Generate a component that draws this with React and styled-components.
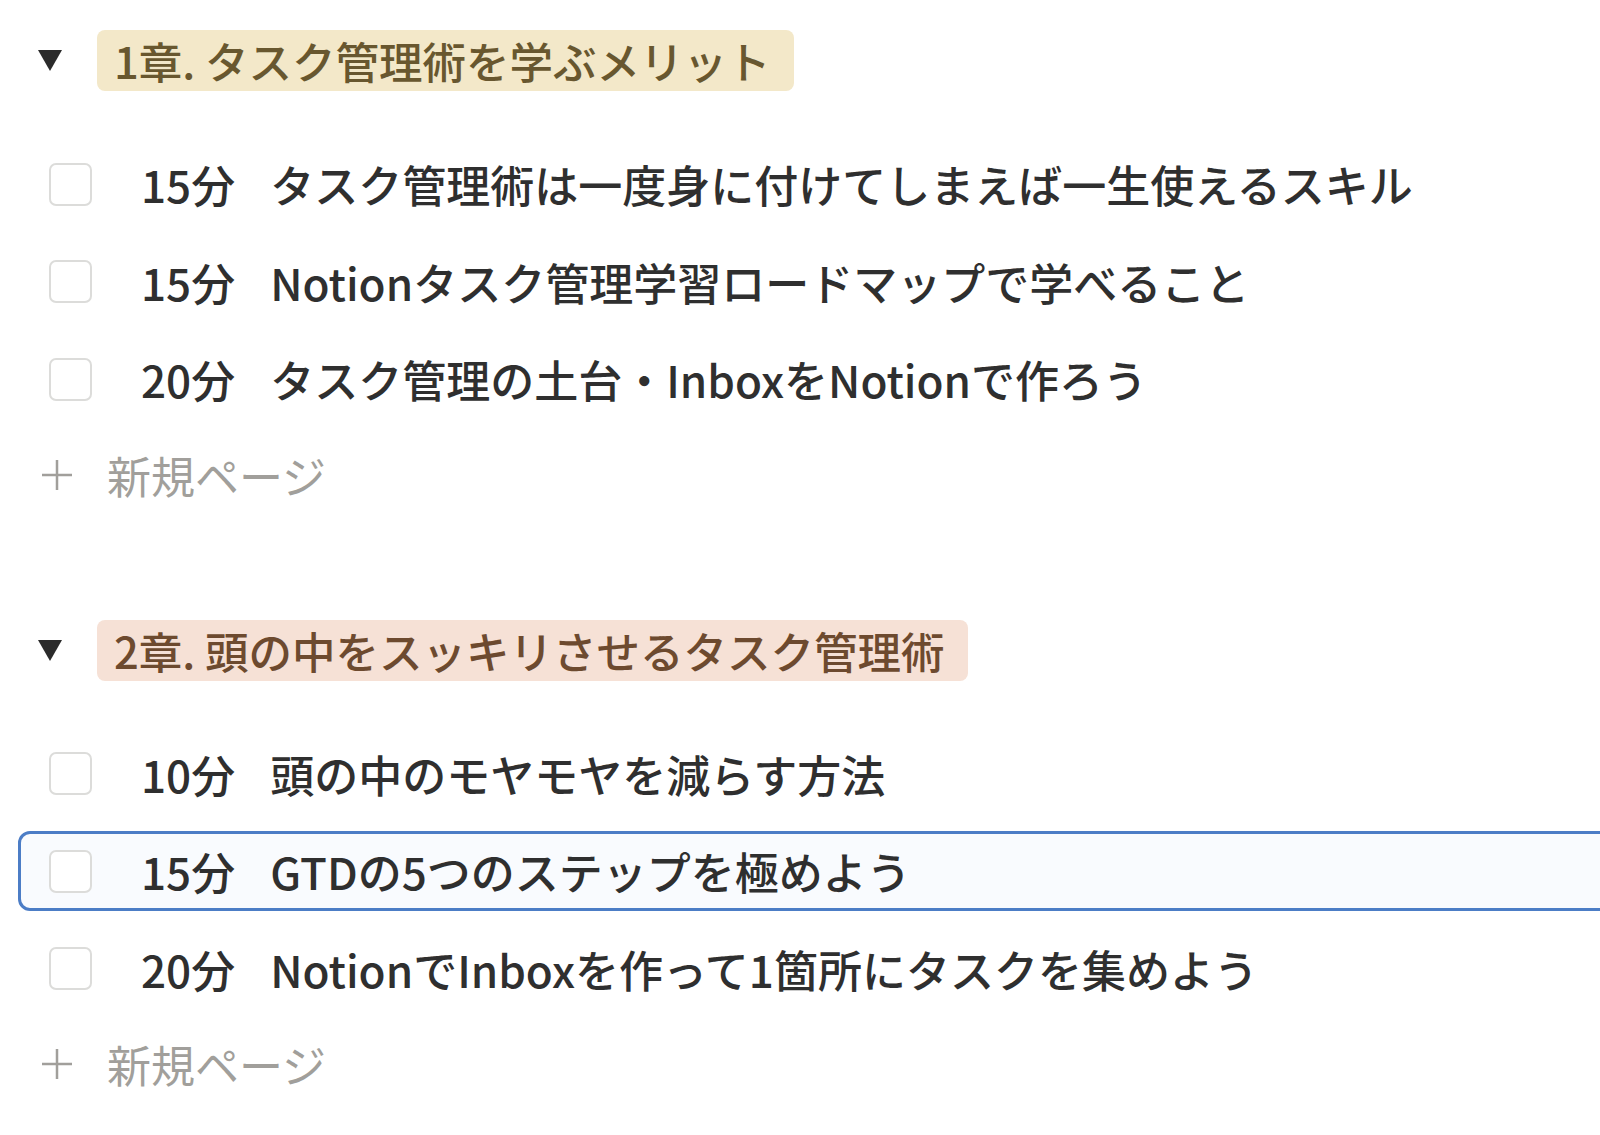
import React from "react";
import styled, { createGlobalStyle } from "styled-components";

const groups = [
  {
    title: "1章. タスク管理術を学ぶメリット",
    color: "yellow",
    items: [
      { time: "15分", title: "タスク管理術は一度身に付けてしまえば一生使えるスキル" },
      { time: "15分", title: "Notionタスク管理学習ロードマップで学べること" },
      { time: "20分", title: "タスク管理の土台・InboxをNotionで作ろう" },
    ],
  },
  {
    title: "2章. 頭の中をスッキリさせるタスク管理術",
    color: "orange",
    items: [
      { time: "10分", title: "頭の中のモヤモヤを減らす方法" },
      { time: "15分", title: "GTDの5つのステップを極めよう", selected: true },
      { time: "20分", title: "NotionでInboxを作って1箇所にタスクを集めよう" },
    ],
  },
];

const badgeColors = {
  yellow: { bg: "#f3e8c9", fg: "#68572f" },
  orange: { bg: "#f6e1d6", fg: "#6d4a2f" },
};

export default function App() {
  return (
    <>
      <GlobalStyle />
      <Page>
        {groups.map((group) => (
          <Group key={group.title}>
            <GroupHeader>
              <Toggle />
              <Badge $color={group.color}>{group.title}</Badge>
            </GroupHeader>
            <List>
              {group.items.map((item) => (
                <Row key={item.title} $selected={item.selected}>
                  <Checkbox />
                  <Time>{item.time}</Time>
                  <Title>{item.title}</Title>
                </Row>
              ))}
              <NewPage>
                <PlusIcon viewBox="0 0 32 32">
                  <path d="M16 1v30M1 16h30" />
                </PlusIcon>
                <span>新規ページ</span>
              </NewPage>
            </List>
          </Group>
        ))}
      </Page>
    </>
  );
}

const GlobalStyle = createGlobalStyle`
  html, body {
    margin: 0;
    padding: 0;
    background: #ffffff;
    overflow: hidden;
  }
  body {
    font-family: "Noto Sans CJK JP", "Noto Sans", sans-serif;
    color: #37352f;
  }
`;

const Page = styled.div`
  width: 1660px;
  padding: 30px 0 0 18px;
  display: flex;
  flex-direction: column;
  gap: 105px;
`;

const Group = styled.section`
  display: flex;
  flex-direction: column;
  gap: 53px;
`;

const GroupHeader = styled.div`
  display: flex;
  align-items: center;
  height: 61px;
  padding-left: 20px;
`;

const Toggle = styled.span`
  width: 0;
  height: 0;
  border-left: 12px solid transparent;
  border-right: 12px solid transparent;
  border-top: 21px solid #2b2b2b;
  margin-right: 35px;
`;

const Badge = styled.div`
  height: 61px;
  display: flex;
  align-items: center;
  padding: 0 23px 0 17px;
  border-radius: 8px;
  font-size: 43.5px;
  font-weight: 500;
  background: ${({ $color }) => badgeColors[$color].bg};
  color: ${({ $color }) => badgeColors[$color].fg};
  white-space: nowrap;
`;

const List = styled.div`
  display: flex;
  flex-direction: column;
  gap: 17.5px;
`;

const Row = styled.div`
  box-sizing: border-box;
  height: 80px;
  display: flex;
  align-items: center;
  padding-left: 28px;
  border: 3px solid ${({ $selected }) => ($selected ? "#4c7dc6" : "transparent")};
  border-radius: 12px;
  background: ${({ $selected }) => ($selected ? "#f9fbfe" : "transparent")};
  font-size: 44px;
  font-weight: 500;
  white-space: nowrap;
`;

const Checkbox = styled.span`
  box-sizing: border-box;
  width: 43px;
  height: 43px;
  border: 2px solid #dcdcda;
  border-radius: 7px;
  background: #ffffff;
  flex-shrink: 0;
`;

const Time = styled.span`
  margin-left: 49px;
  margin-right: 35px;
  color: #2f2f2f;
`;

const Title = styled.span`
  color: #2f2f2f;
`;

const NewPage = styled.div`
  height: 80px;
  margin-top: -2px;
  display: flex;
  align-items: center;
  padding-left: 23px;
  font-size: 44px;
  color: #a19f9b;
  gap: 34px;
`;

const PlusIcon = styled.svg`
  width: 32px;
  height: 32px;
  fill: none;
  stroke: #a19f9b;
  stroke-width: 2.5;
`;
